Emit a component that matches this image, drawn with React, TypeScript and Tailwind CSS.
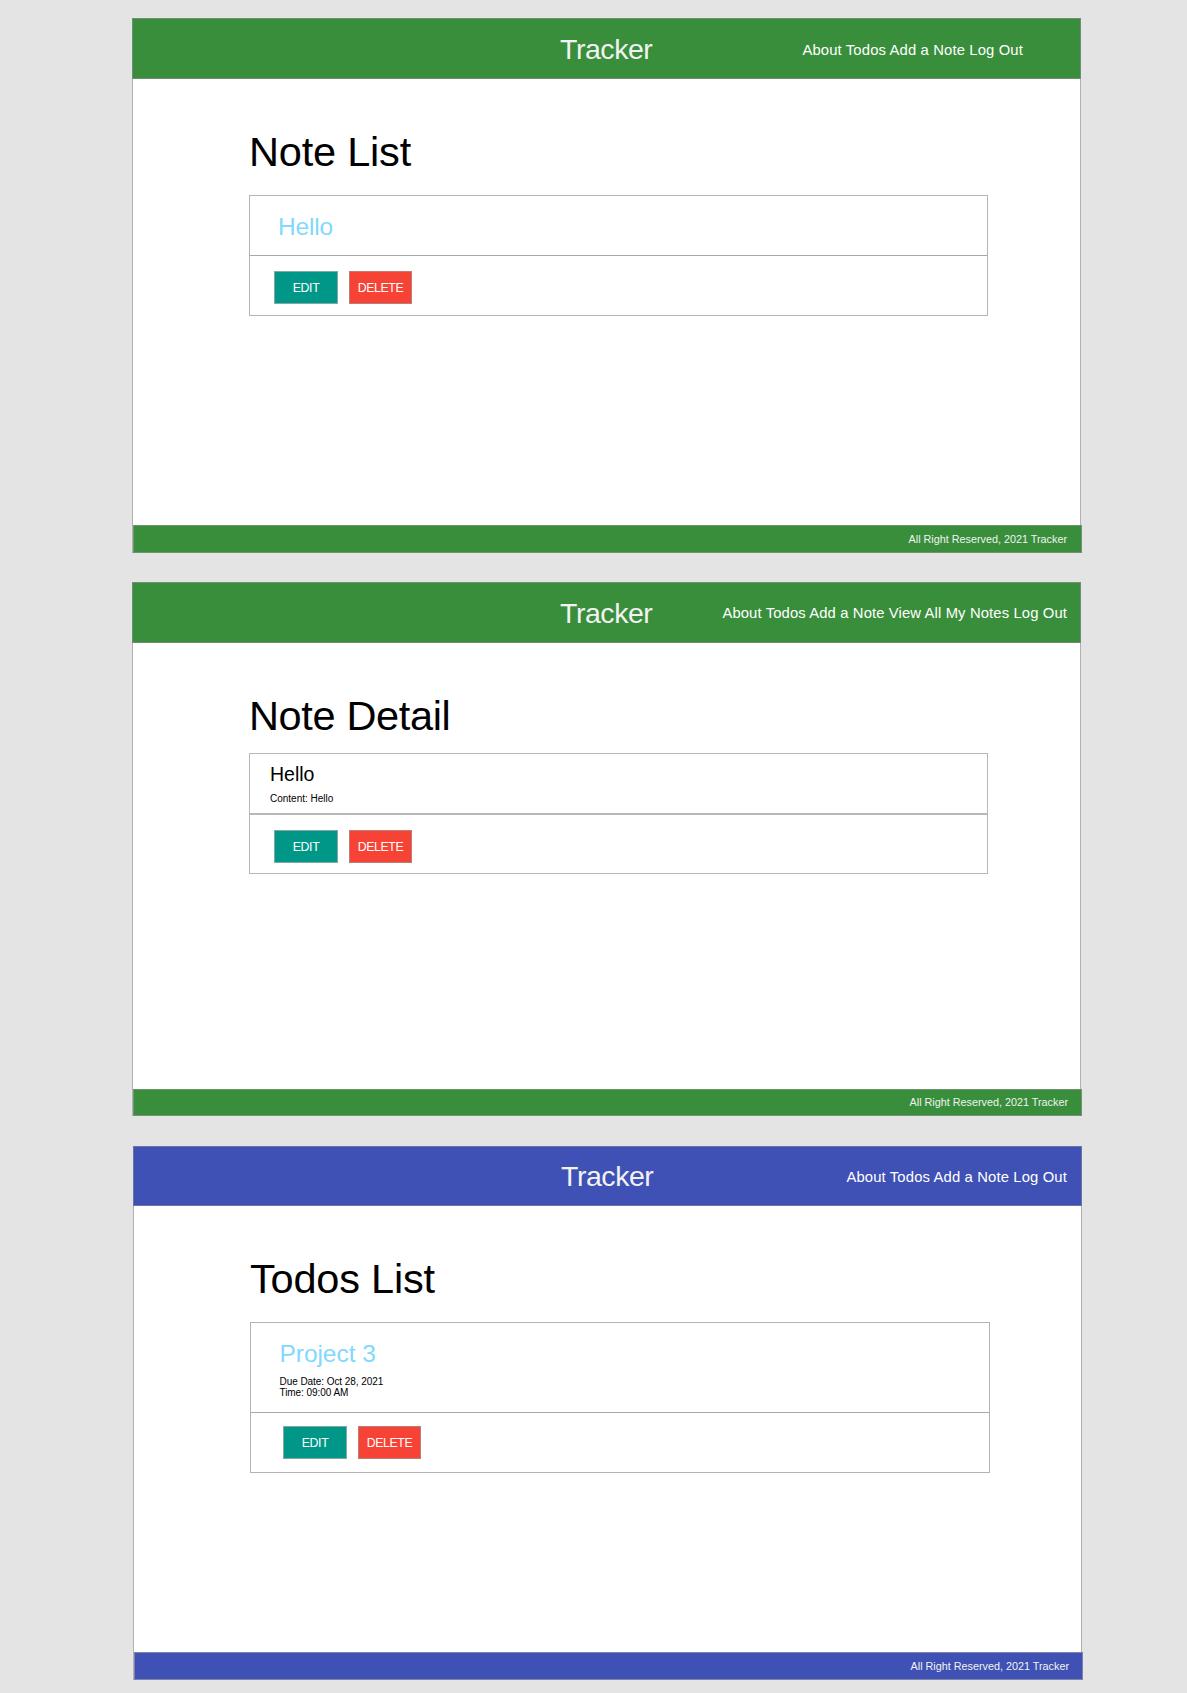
import type { ReactNode } from "react";

function Nav({ children, className }: { children: ReactNode; className: string }) {
  return (
    <nav className={`whitespace-nowrap text-right text-[14.8px] leading-5 ${className}`}>
      {children}
    </nav>
  );
}

function Brand({ className }: { className: string }) {
  return (
    <div className={`w-[100px] whitespace-nowrap text-[28.5px] leading-8 tracking-[-0.45px] text-[#f2f2f2] ${className}`}>
      Tracker
    </div>
  );
}

function Actions({ className }: { className: string }) {
  return (
    <div className={`flex gap-[11px] text-[12.3px] tracking-[-0.35px] text-white ${className}`}>
      <button className="h-[33px] w-16 border border-[#84a9a4] bg-[#009788] pt-0.5">EDIT</button>
      <button className="h-[33px] w-[63px] border border-[#b87f7a] bg-[#f74336] pt-0.5">DELETE</button>
    </div>
  );
}

function Footer({ className }: { className: string }) {
  return (
    <footer className={`w-[949px] border text-right text-[10.8px] text-[#f0f4f0] ${className}`}>
      All Right Reserved, 2021 Tracker
    </footer>
  );
}

export default function App() {
  return (
    <div className="h-[1693px] w-[1187px] overflow-hidden bg-[#e4e4e4] pt-[18px] font-['Liberation_Sans',Arial,sans-serif] text-black">
      <section className="ml-[132px] flex h-[535px] w-[949px] flex-col border-x border-[#b1b1b1] bg-white">
        <header className="-mx-px flex h-[61px] shrink-0 items-start border border-[#748c74] bg-[#398e3c] text-white">
          <Brand className="ml-[427px] mt-[14px]" />
          <Nav className="ml-auto mr-[57px] mt-[21px] tracking-[0.15px]">About Todos Add a Note Log Out</Nav>
        </header>
        <h1 className="ml-[116px] mt-[49px] h-12 whitespace-nowrap text-[41.5px] leading-[48px] tracking-[-0.2px]">
          Note List
        </h1>
        <div className="ml-[116px] mt-[19px] h-[121px] w-[739px] border border-[#b3b3b3]">
          <div className="h-[60px] border-b border-[#a8a8a8] pl-7 pt-[17px] text-[24.5px] leading-7 tracking-[-0.15px] text-[#82d8fd]">
            Hello
          </div>
          <Actions className="ml-6 mt-[15px]" />
        </div>
        <Footer className="mt-auto h-7 border-[#719371] bg-[#398e3c] pr-3.5 leading-[26px]" />
      </section>

      <section className="ml-[132px] mt-[29px] flex h-[534px] w-[949px] flex-col border-x border-[#b1b1b1] bg-white">
        <header className="-mx-px flex h-[61px] shrink-0 items-start border border-[#748c74] bg-[#398e3c] text-white">
          <Brand className="ml-[427px] mt-[14px]" />
          <Nav className="ml-auto mr-[13px] mt-5 tracking-[0.13px]">About Todos Add a Note View All My Notes Log Out</Nav>
        </header>
        <h1 className="ml-[116px] mt-[49px] h-12 whitespace-nowrap text-[41.5px] leading-[48px] tracking-[-0.35px]">
          Note Detail
        </h1>
        <div className="ml-[116px] mt-[13px] h-[121px] w-[739px] border border-[#b8b8b8]">
          <div className="h-[61px] border-b-2 border-[#b8b8b8] pl-5">
            <div className="pt-[9px] text-[19.5px] leading-[22px]">Hello</div>
            <div className="mt-2 text-[10px] leading-3">Content: Hello</div>
          </div>
          <Actions className="ml-6 mt-[15px]" />
        </div>
        <Footer className="mt-auto h-[27px] border-[#719371] bg-[#398e3c] pr-[13px] leading-[25px]" />
      </section>

      <section className="ml-[133px] mt-[30px] flex h-[534px] w-[949px] flex-col border-x border-[#b1b1b1] bg-white">
        <header className="-mx-px flex h-[60px] shrink-0 items-start border border-[#6b74a8] bg-[#3f51b5] text-white">
          <Brand className="ml-[427px] mt-[13px]" />
          <Nav className="ml-auto mr-[14px] mt-5 tracking-[0.15px]">About Todos Add a Note Log Out</Nav>
        </header>
        <h1 className="ml-[116px] mt-[49px] h-12 whitespace-nowrap text-[41.5px] leading-[48px] tracking-[-0.2px]">
          Todos List
        </h1>
        <div className="ml-[116px] mt-[19px] h-[151px] w-[740px] border border-[#b3b3b3]">
          <div className="h-[90px] border-b border-[#a8a8a8] pl-[28.5px]">
            <div className="pt-[17px] text-[24.5px] leading-7 tracking-[-0.05px] text-[#82d8fd]">Project 3</div>
            <div className="mt-2 text-[10px] leading-[11px] tracking-[-0.06px]">
              Due Date: Oct 28, 2021
              <br />
              Time: 09:00 AM
            </div>
          </div>
          <Actions className="ml-8 mt-[13px]" />
        </div>
        <Footer className="mt-auto h-7 border-[#7c82a8] bg-[#3f51b5] pr-[13px] leading-[26px]" />
      </section>
    </div>
  );
}
